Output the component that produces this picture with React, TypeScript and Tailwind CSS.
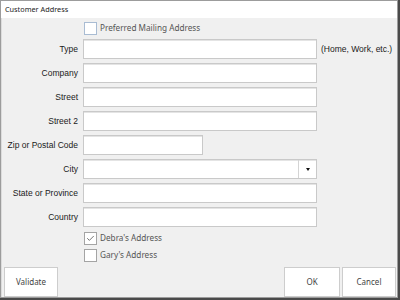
import { Check } from "lucide-react";

const rows = [
  { label: "Type", width: "w-[234px]", hint: "(Home, Work, etc.)" },
  { label: "Company", width: "w-[234px]" },
  { label: "Street", width: "w-[234px]" },
  { label: "Street 2", width: "w-[234px]" },
  { label: "Zip or Postal Code", width: "w-[120px]" },
  { label: "City", width: "w-[234px]", combo: true },
  { label: "State or Province", width: "w-[234px]" },
  { label: "Country", width: "w-[234px]" },
];

function CheckRow({ text, checked, blue, className }: { text: string; checked?: boolean; blue?: boolean; className?: string }) {
  return (
    <div className={"flex items-center h-[13px] " + (className ?? "")}>
      <div className="w-[82px]" />
      <div
        className={
          "w-[13px] h-[13px] bg-white border flex items-center justify-center " +
          (blue ? "border-[#a9bcd3]" : "border-[#a4a4a4]")
        }
      >
        {checked && <Check size={9} strokeWidth={1.8} className="text-[#333]" />}
      </div>
      <span className="ml-[3px] text-[8.2px] text-[#555] font-['Noto_Sans',sans-serif]">{text}</span>
    </div>
  );
}

export default function App() {
  return (
    <div className="w-[400px] h-[300px] bg-[#4a4a4a] font-['Liberation_Sans',sans-serif]">
      <div className="w-[398px] h-[298px] border border-[#9c9c9c] flex flex-col bg-[#f0f0f0]">
        <div className="h-[17px] bg-white flex items-center px-[4px]">
          <span className="text-[7.3px] text-[#222] font-['Noto_Sans',sans-serif]">Customer Address</span>
        </div>

        <div className="flex-1 flex flex-col border-l border-[#dcdcdc]">
          <CheckRow text="Preferred Mailing Address" blue className="mt-[4px]" />

          <div className="flex flex-col gap-[4px] mt-[4px]">
            {rows.map((r) => (
              <div key={r.label} className="flex items-center h-[20px]">
                <div className="w-[77px] text-right text-[8.5px] text-[#1a1a1a] pr-[1px]">{r.label}</div>
                <div
                  className={
                    r.width +
                    " ml-[4px] h-[20px] bg-white border border-[#c9c9c9] shadow-[inset_0_1px_0_#e4e4e4] flex"
                  }
                >
                  {r.combo && (
                    <div className="ml-auto w-[18px] h-full border-l border-[#d4d4d4] flex items-center justify-center">
                      <div className="w-0 h-0 border-l-[2.5px] border-r-[2.5px] border-t-[3px] border-l-transparent border-r-transparent border-t-[#111]" />
                    </div>
                  )}
                </div>
                {r.hint && <span className="ml-[4px] text-[8.5px] text-[#1a1a1a]">{r.hint}</span>}
              </div>
            ))}
          </div>

          <CheckRow text="Debra's Address" checked className="mt-[5px]" />
          <CheckRow text="Gary's Address" className="mt-[4px]" />

          <div className="mt-auto flex items-end pl-[2px] pr-[1px] pb-0">
            <button className="w-[54px] h-[30px] bg-white border border-[#cdcdcd] text-[8px] text-[#444] font-['Noto_Sans',sans-serif]">
              Validate
            </button>
            <div className="flex-1" />
            <button className="w-[56px] h-[30px] bg-white border border-[#cdcdcd] text-[8px] text-[#444] font-['Noto_Sans',sans-serif]">
              OK
            </button>
            <button className="ml-[2px] w-[54px] h-[30px] bg-white border border-[#cdcdcd] text-[8px] text-[#444] font-['Noto_Sans',sans-serif]">
              Cancel
            </button>
          </div>
        </div>
      </div>
    </div>
  );
}
